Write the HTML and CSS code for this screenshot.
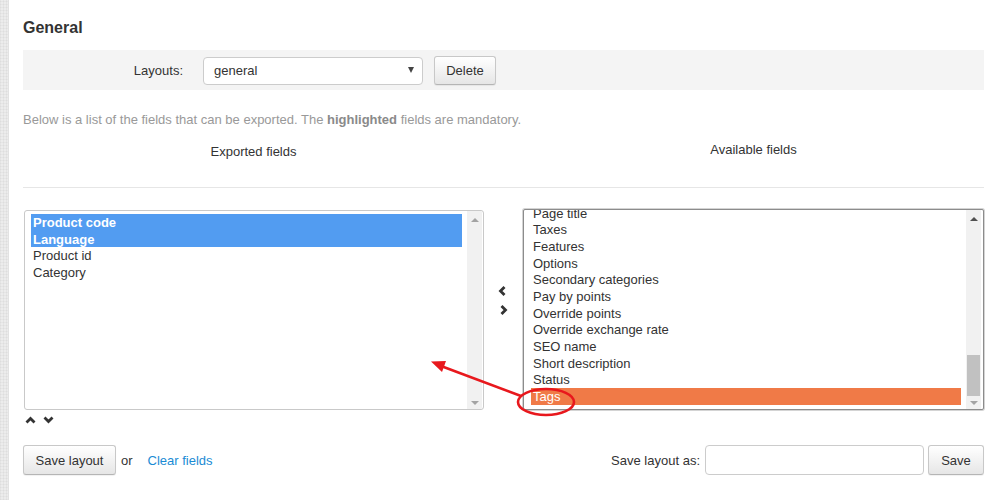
FILE: index.html
```html
<!DOCTYPE html>
<html>
<head>
<meta charset="utf-8">
<link rel="stylesheet" href="styles.css">
</head>
<body>
<div class="page">
  <div class="strip"></div>
  <main class="main">
    <h2 class="title">General</h2>
    <div class="bar">
      <label class="bar-label">Layouts:</label>
      <div class="select"><span>general</span><span class="caret"></span></div>
      <button class="btn btn-delete">Delete</button>
    </div>
    <p class="desc">Below is a list of the fields that can be exported. The <b>highlighted</b> fields are mandatory.</p>
    <div class="heads">
      <div class="head head-left">Exported fields</div>
      <div class="head-gap"></div>
      <div class="head head-right">Available fields</div>
    </div>
    <div class="sep"></div>
    <div class="lists">
      <div class="col-left">
        <div class="listbox listbox-left">
          <div class="items">
            <div class="item sel-blue">Product code</div>
            <div class="item sel-blue">Language</div>
            <div class="item">Product id</div>
            <div class="item">Category</div>
          </div>
          <div class="sbar sbar-left">
            <span class="tri-up light"></span>
            <span class="sbar-fill"></span>
            <span class="tri-down light"></span>
          </div>
        </div>
        <div class="order">
          <svg width="11" height="8" viewBox="0 0 11 8"><path d="M1.5 6.5 L5.5 2.5 L9.5 6.5" fill="none" stroke="#333" stroke-width="2.8"/></svg>
          <svg width="11" height="8" viewBox="0 0 11 8"><path d="M1.5 1.5 L5.5 5.5 L9.5 1.5" fill="none" stroke="#333" stroke-width="2.8"/></svg>
        </div>
      </div>
      <div class="movers">
        <svg class="mv-left" width="8" height="10" viewBox="0 0 8 10"><path d="M6.5 1 L2.5 5 L6.5 9" fill="none" stroke="#333" stroke-width="2.8"/></svg>
        <svg class="mv-right" width="8" height="10" viewBox="0 0 8 10"><path d="M1.5 1 L5.5 5 L1.5 9" fill="none" stroke="#333" stroke-width="2.8"/></svg>
      </div>
      <div class="listbox listbox-right">
        <div class="items items-scrolled">
          <div class="item">Page title</div>
          <div class="item">Taxes</div>
          <div class="item">Features</div>
          <div class="item">Options</div>
          <div class="item">Secondary categories</div>
          <div class="item">Pay by points</div>
          <div class="item">Override points</div>
          <div class="item">Override exchange rate</div>
          <div class="item">SEO name</div>
          <div class="item">Short description</div>
          <div class="item">Status</div>
          <div class="item sel-orange">Tags</div>
        </div>
        <div class="sbar sbar-right">
          <span class="tri-up dark"></span>
          <span class="sbar-fill"></span>
          <span class="thumb"></span>
          <span class="tri-down light"></span>
        </div>
      </div>
    </div>
    <div class="footer">
      <div class="foot-left">
        <button class="btn btn-save-layout">Save layout</button>
        <span class="or">or</span>
        <a class="link" href="#">Clear fields</a>
      </div>
      <div class="foot-right">
        <label class="save-as">Save layout as:</label>
        <input class="text-input" type="text">
        <button class="btn btn-save">Save</button>
      </div>
    </div>
  </main>
  <svg class="annot" width="998" height="500" viewBox="0 0 998 500">
    <line x1="521" y1="396" x2="441" y2="366" stroke="#e8181d" stroke-width="2.6"/>
    <polygon points="431,361.5 446,361 442,372" fill="#e8181d"/>
    <ellipse cx="546" cy="402" rx="28" ry="13" fill="none" stroke="#e8181d" stroke-width="2.6"/>
  </svg>
</div>
</body>
</html>
```

FILE: styles.css
```css
* { box-sizing: border-box; }
html, body { margin: 0; padding: 0; background: #fff; }
body {
  font-family: "Liberation Sans", Arial, sans-serif;
  font-size: 13px;
  color: #333;
}
.page {
  position: relative;
  display: flex;
  width: 998px;
  height: 500px;
  overflow: hidden;
}
.strip {
  width: 9px;
  flex: 0 0 9px;
  background-color: #ececec;
  background-image:
    repeating-linear-gradient(90deg, rgba(0,0,0,0.035) 0 1px, transparent 1px 3px),
    repeating-linear-gradient(0deg, rgba(0,0,0,0.03) 0 1px, transparent 1px 3px);
  border-right: 1px solid #e2e2e2;
}
.main {
  flex: 1;
  padding: 0 14px 0 14px;
}
.title {
  margin: 0 0 12px;
  padding-top: 18px;
  font-size: 16px;
  line-height: 20px;
  font-weight: bold;
  color: #333;
}
.bar {
  height: 40px;
  background: #f4f4f4;
  display: flex;
  align-items: center;
}
.bar-label {
  width: 160px;
  text-align: right;
  margin-right: 20px;
  color: #333;
}
.select {
  width: 220px;
  height: 28px;
  border: 1px solid #ccc;
  border-radius: 4px;
  background: #fff;
  display: flex;
  align-items: center;
  justify-content: space-between;
  padding: 0 8px 0 10px;
  margin-top: 1px;
}
.caret {
  width: 0;
  height: 0;
  border-left: 3.5px solid transparent;
  border-right: 3.5px solid transparent;
  border-top: 6px solid #444;
  margin-top: -1px;
}
.btn {
  font-family: "Liberation Sans", Arial, sans-serif;
  font-size: 13px;
  color: #333;
  height: 30px;
  padding: 0 12px;
  border: 1px solid #c8c8c8;
  border-bottom-color: #b5b5b5;
  border-radius: 3px;
  background: linear-gradient(#ffffff, #e6e6e6);
  box-shadow: 0 1px 1px rgba(0,0,0,0.06);
  cursor: pointer;
}
.btn-delete {
  margin-left: 11px;
  height: 29px;
  width: 62px;
  padding: 0;
}
.desc {
  margin: 22px 0 0;
  line-height: 16px;
  color: #999;
}
.desc b { color: #8a8a8a; }
.heads {
  display: flex;
  margin-top: 14px;
  height: 18px;
}
.head {
  text-align: center;
  line-height: 16px;
}
.head-left { width: 461px; padding-top: 2px; }
.head-gap { width: 39px; }
.head-right { flex: 1; }
.sep {
  margin-top: 27px;
  border-top: 1px solid #e6e6e6;
}
.lists {
  display: flex;
  margin-top: 21px;
}
.col-left {
  width: 461px;
  display: flex;
  flex-direction: column;
}
.listbox {
  display: flex;
  background: #fff;
  overflow: hidden;
}
.listbox-left {
  margin-top: 1px;
  margin-left: 1px;
  width: 460px;
  height: 200px;
  border: 1px solid #c9c9c9;
  border-radius: 3px;
  padding-right: 1px;
}
.listbox-right {
  width: 461px;
  height: 201px;
  border: 1px solid #8c8c8c;
  border-radius: 2px;
  box-shadow: 0 0 0 1px #d4d4d4;
  padding-right: 2px;
}
.items {
  flex: 1;
  overflow: hidden;
  padding-top: 3px;
}
.listbox-left .items { padding-left: 6px; }
.listbox-right .items { padding-left: 7px; padding-top: 0; }
.items-scrolled .item:first-child { margin-top: -5.3px; }
.item {
  height: 16.67px;
  line-height: 15.67px;
  padding: 1px 0 0 2px;
  white-space: nowrap;
  color: #333;
}
.sel-blue {
  background: #529cf1;
  color: #fff;
  font-weight: bold;
}
.sel-orange {
  background: #f07a47;
  color: #fff;
}
.sbar {
  width: 15px;
  flex: 0 0 15px;
  margin-left: 5px;
  background: #f1f1f1;
  display: flex;
  flex-direction: column;
  align-items: center;
  padding: 7px 0 4px;
}
.sbar-fill { flex: 1; }
.thumb {
  width: 13px;
  height: 41px;
  background: #c1c1c1;
  margin-bottom: 5px;
}
.tri-up, .tri-down {
  width: 0;
  height: 0;
  border-left: 4px solid transparent;
  border-right: 4px solid transparent;
}
.tri-up { border-bottom: 4px solid #a3a3a3; }
.tri-down { border-top: 4px solid #a3a3a3; }
.tri-up.dark { border-bottom-color: #505050; }
.order {
  display: flex;
  gap: 7px;
  margin-top: 6px;
  padding-left: 2px;
}
.movers {
  width: 39px;
  display: flex;
  flex-direction: column;
  padding-top: 77px;
}
.mv-left { margin-left: 14px; }
.mv-right { margin-left: 16px; margin-top: 9px; }
.footer {
  display: flex;
  justify-content: space-between;
  align-items: center;
  margin-top: 21px;
  height: 30px;
}
.foot-left, .foot-right {
  display: flex;
  align-items: center;
}
.or { margin-left: 5px; }
.link {
  margin-left: 15px;
  color: #1a8bd4;
  text-decoration: none;
}
.save-as { margin-right: 5px; }
.text-input {
  width: 219px;
  height: 30px;
  border: 1px solid #ccc;
  border-radius: 4px;
  background: #fff;
  margin-right: 4px;
}
.btn-save { width: 56px; padding: 0; }
.btn-save-layout { width: 93px; padding: 0; }
.annot {
  position: absolute;
  left: 0;
  top: 0;
  pointer-events: none;
}
```
